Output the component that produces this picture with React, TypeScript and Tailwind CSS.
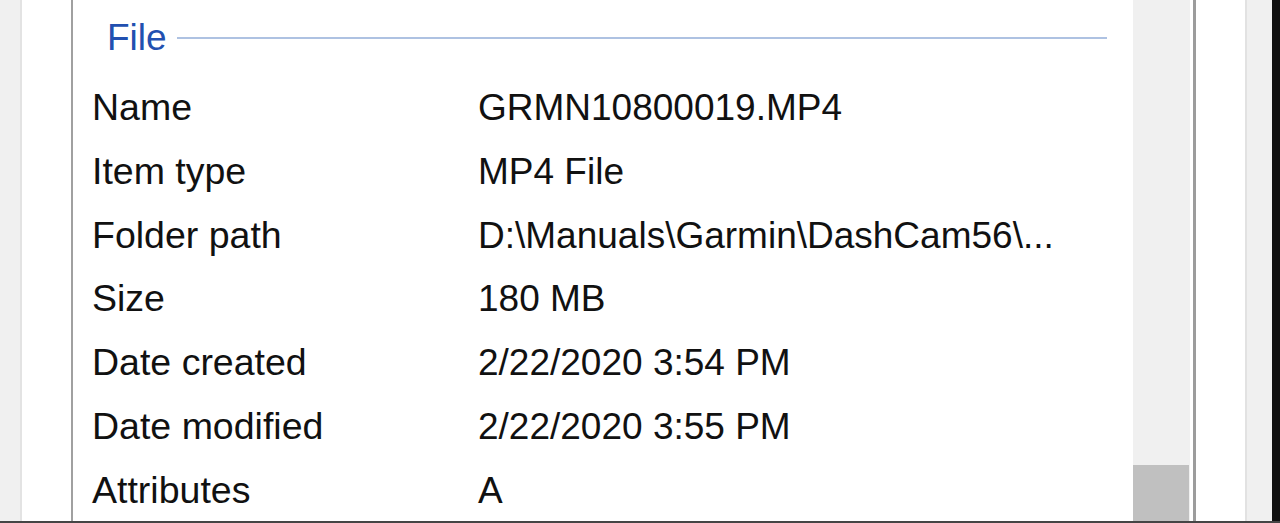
const ROWS: [string, string][] = [
  ['Name', 'GRMN10800019.MP4'],
  ['Item type', 'MP4 File'],
  ['Folder path', 'D:\\Manuals\\Garmin\\DashCam56\\...'],
  ['Size', '180 MB'],
  ['Date created', '2/22/2020 3:54 PM'],
  ['Date modified', '2/22/2020 3:55 PM'],
  ['Attributes', 'A'],
];

function Scrollbar() {
  return (
    <div className="flex w-[57px] flex-col justify-end bg-[#f0f0f0]">
      <div className="h-[56px] w-[56px] bg-[#c0c0c0]" />
    </div>
  );
}

export default function App() {
  return (
    <div
      className="flex h-[523px] w-[1280px] flex-col overflow-hidden bg-white"
      style={{ fontFamily: '"Liberation Sans", Arial, sans-serif' }}
    >
      <div className="flex min-h-0 flex-1">
        {/* left edge of the window behind */}
        <div className="w-[20px] bg-[#f0f0f0]" />
        <div className="w-[2px] bg-[#e3e3e3]" />
        <div className="w-[49px] bg-white" />
        <div className="w-[2px] bg-[#a0a0a0]" />

        {/* details pane */}
        <div className="flex-1 overflow-hidden bg-white pl-[19px] pr-[26px] pt-[18px] text-[#111]">
          <div className="flex h-[40px] items-center pl-[15px] leading-[40px]">
            <span className="text-[37px] text-[#2250b0]">File</span>
            <div className="ml-[10px] h-[2px] flex-1 bg-[#aec2e2]" />
          </div>
          <div className="mt-[18px]">
            {ROWS.map(([label, value]) => (
              <div key={label} className="flex h-[63.75px] leading-[63.75px] whitespace-nowrap">
                <div className="w-[386px] shrink-0 text-[37.5px]">{label}</div>
                <div className="text-[37px]">{value}</div>
              </div>
            ))}
          </div>
        </div>

        <Scrollbar />
        <div className="w-[3px] bg-white" />
        <div className="w-[3px] bg-[#9c9c9c]" />
        <div className="w-[49px] bg-white" />
        <div className="w-[2px] bg-[#e2e2e2]" />
        <div className="w-[25px] bg-[#f0f0f0]" />
        <div className="w-[8px] bg-[#111]" />
      </div>
      <div className="h-[2px] bg-[#454545]" />
    </div>
  );
}
